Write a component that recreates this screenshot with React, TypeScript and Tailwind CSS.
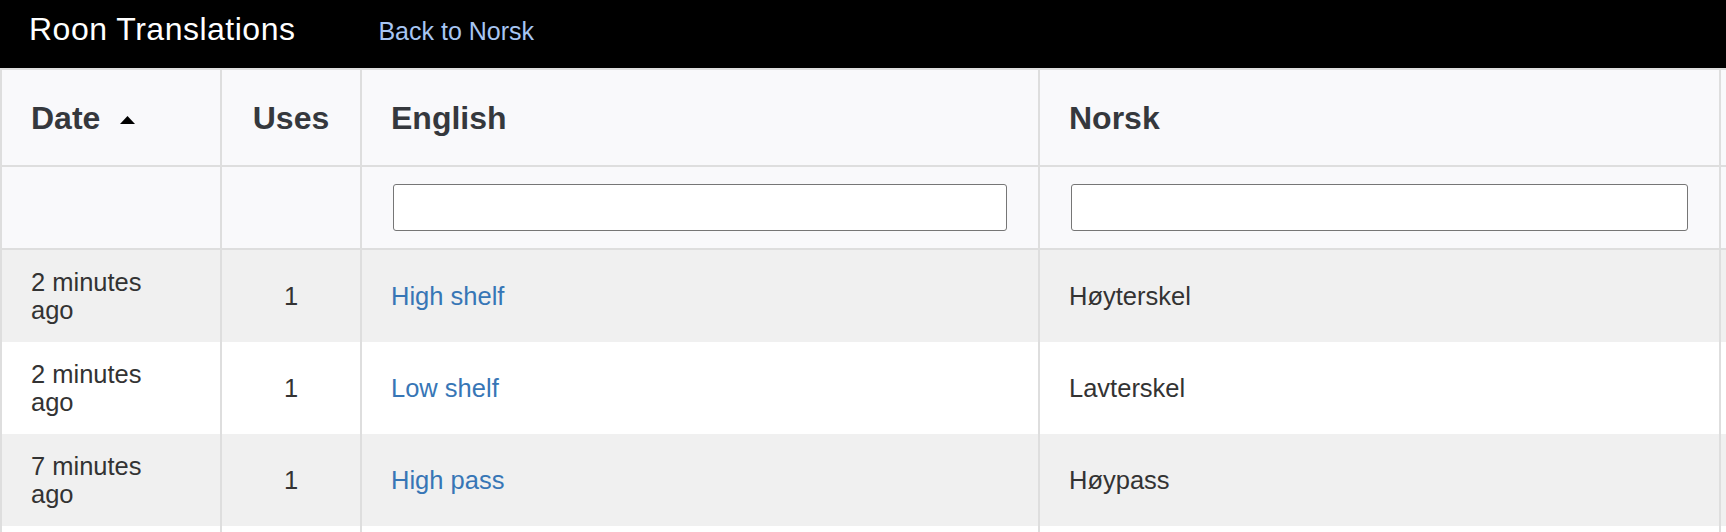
import React from "react";

const ROW = "grid grid-cols-[222px_140px_678px_681px_200px]";
const CELL = "border-r-2 border-[#dedede] flex items-center";

const rows = [
  { date: "2 minutes ago", uses: 1, english: "High shelf", norsk: "Høyterskel" },
  { date: "2 minutes ago", uses: 1, english: "Low shelf", norsk: "Lavterskel" },
  { date: "7 minutes ago", uses: 1, english: "High pass", norsk: "Høypass" },
];

function SortUp() {
  return (
    <svg className="ml-[20px] mt-[4px] w-[15px] h-[8px]" viewBox="0 0 15 8" aria-hidden="true">
      <path d="M7.5 0L15 8H0z" fill="#000" />
    </svg>
  );
}

export default function App() {
  return (
    <div
      className="w-[1726px] h-[532px] overflow-hidden bg-white"
      style={{ fontFamily: '"Liberation Sans", Arial, Helvetica, sans-serif' }}
    >
      <header className="h-[68px] bg-black flex items-baseline pt-[14px] pl-[29px]">
        <span className="text-white text-[32px] leading-[31px] tracking-[0.5px]">
          Roon Translations
        </span>
        <a className="ml-[83px] text-[#a7c5f2] text-[25px] leading-[25px]" href="#">
          Back to Norsk
        </a>
      </header>

      <div className="w-[1921px]">
        {/* column titles */}
        <div className={`${ROW} bg-[#f9f9fb] border-t-2 border-b-2 border-[#dedede] h-[99px] text-[32px] font-bold text-[#35383d]`}>
          <div className={`${CELL} border-l-2 pl-[29px]`}>
            <span>Date</span>
            <SortUp />
          </div>
          <div className={`${CELL} justify-center`}>Uses</div>
          <div className={`${CELL} pl-[29px]`}>English</div>
          <div className={`${CELL} pl-[29px]`}>Norsk</div>
          <div />
        </div>

        {/* filters */}
        <div className={`${ROW} bg-[#f9f9fb] border-b-2 border-[#dedede] h-[83px]`}>
          <div className={`${CELL} border-l-2`} />
          <div className={CELL} />
          <div className={`${CELL} px-[31px]`}>
            <input
              type="text"
              aria-label="Filter English"
              className="w-full h-[47px] bg-white border border-[#767676] rounded-[3px] px-2 text-[25px] outline-none"
            />
          </div>
          <div className={`${CELL} px-[31px]`}>
            <input
              type="text"
              aria-label="Filter Norsk"
              className="w-full h-[47px] bg-white border border-[#767676] rounded-[3px] px-2 text-[25px] outline-none"
            />
          </div>
          <div />
        </div>

        {rows.map((r, i) => (
          <div
            key={i}
            className={`${ROW} h-[92px] text-[25.5px] leading-[28px] text-[#333] ${
              i % 2 === 0 ? "bg-[#f0f0f0]" : "bg-white"
            }`}
          >
            <div className={`${CELL} border-l-2 pl-[29px]`}>
              <span className="max-w-[130px]">{r.date}</span>
            </div>
            <div className={`${CELL} justify-center`}>{r.uses}</div>
            <div className={`${CELL} pl-[29px]`}>
              <a href="#" className="text-[#3776b6]">
                {r.english}
              </a>
            </div>
            <div className={`${CELL} pl-[29px]`}>{r.norsk}</div>
            <div />
          </div>
        ))}

        {/* next row, below the fold */}
        <div className={`${ROW} h-[92px] bg-white`}>
          <div className={`${CELL} border-l-2`} />
          <div className={CELL} />
          <div className={CELL} />
          <div className={CELL} />
          <div />
        </div>
      </div>
    </div>
  );
}
